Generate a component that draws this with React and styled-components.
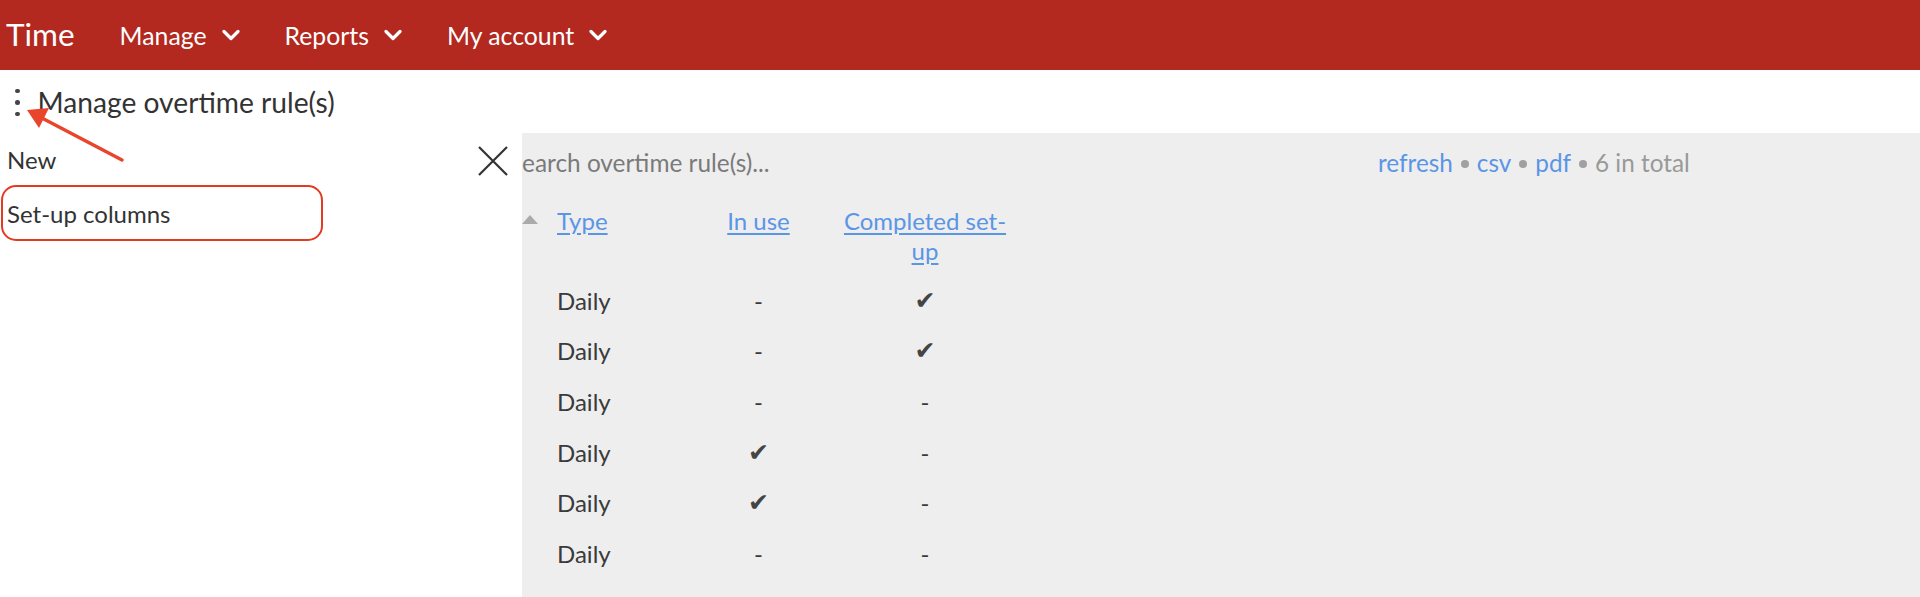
import React from "react";
import styled, { createGlobalStyle } from "styled-components";

const GlobalStyle = createGlobalStyle`
  html, body { margin: 0; padding: 0; }
  body {
    font-family: Lato, "Open Sans", "Liberation Sans", sans-serif;
    color: #333;
    background: #fff;
  }
  * { box-sizing: border-box; }
`;

const Page = styled.div`
  min-height: 100vh;
  display: flex;
  flex-direction: column;
`;

const TopBar = styled.header`
  height: 70px;
  background: #b3281f;
  display: flex;
  align-items: center;
  padding-left: 6px;
  color: #fff;
`;

const Brand = styled.div`
  font-size: 31.5px;
  margin-right: 45px;
  line-height: 1;
`;

const NavList = styled.nav`
  display: flex;
  align-items: center;
  gap: 45px;
`;

const NavItem = styled.div`
  display: flex;
  align-items: center;
  gap: 15px;
  font-size: 24.8px;
`;

const Chevron = () => (
  <svg width="18" height="12" viewBox="0 0 18 12" fill="none">
    <path d="M2 2.5 L9 9.5 L16 2.5" stroke="#fff" strokeWidth="3.2" strokeLinecap="round" strokeLinejoin="round" />
  </svg>
);

const TitleRow = styled.div`
  height: 63px;
  display: flex;
  align-items: center;
  padding-left: 15px;
  gap: 18px;
`;

const Dots = styled.div`
  display: flex;
  flex-direction: column;
  gap: 7px;
  padding-top: 2px;
  span {
    width: 4.5px;
    height: 4.5px;
    border-radius: 50%;
    background: #444;
  }
`;

const Title = styled.h1`
  margin: 0;
  font-size: 28.2px;
  font-weight: 400;
  color: #333;
`;

const Body = styled.div`
  flex: 1;
  display: flex;
  position: relative;
`;

const Sidebar = styled.div`
  width: 477px;
  padding-left: 1px;
  display: flex;
  flex-direction: column;
`;

const MenuItem = styled.div`
  width: 322px;
  height: ${(p) => (p.$highlighted ? "56px" : "52px")};
  display: flex;
  align-items: center;
  padding-left: 4px;
  font-size: 24px;
  color: #333;
  border: 2.5px solid ${(p) => (p.$highlighted ? "#e33b22" : "transparent")};
  border-radius: 15px;
`;

const ArrowOverlay = styled.svg`
  position: absolute;
  left: 0;
  top: -70px;
  pointer-events: none;
`;

const CloseButton = styled.button`
  width: 32px;
  height: 32px;
  margin-top: 12px;
  padding: 0;
  border: 0;
  background: none;
  flex-shrink: 0;
`;

const Panel = styled.section`
  flex: 1;
  margin-left: 13px;
  background: #eeeeee;
  display: flex;
  flex-direction: column;
`;

const Toolbar = styled.div`
  height: 58px;
  display: flex;
  align-items: center;
`;

const SearchInput = styled.input`
  width: 856px;
  border: 0;
  background: transparent;
  padding: 0;
  font-family: inherit;
  font-size: 24.4px;
  color: #333;
  outline: none;
  &::placeholder { color: #7a7a7a; }
`;

const Actions = styled.div`
  font-size: 24.3px;
  color: #999;
  display: flex;
  align-items: center;
  gap: 8px;
`;

const ActionLink = styled.a`
  color: #5b95e6;
  text-decoration: none;
`;

const Bullet = styled.span`
  width: 8px;
  height: 8px;
  margin-top: 3px;
  border-radius: 50%;
  background: #a0a0a0;
  display: inline-block;
`;

const Grid = styled.div`
  display: grid;
  grid-template-columns: 35px 140px 123px 210px;
  font-size: 24px;
  color: #3a3a3a;
`;

const HeadCell = styled.div`
  padding: 15px ${(p) => (p.$pad ? "22px" : "0")} 9px;
  line-height: 30px;
  display: flex;
  justify-content: ${(p) => (p.$align === "center" ? "center" : "flex-start")};
  align-items: flex-start;
`;

const SortIcon = styled.span`
  margin-top: 9px;
  width: 0;
  height: 0;
  border-left: 8.5px solid transparent;
  border-right: 8.5px solid transparent;
  border-bottom: 9px solid #aaa;
`;

const HeadLink = styled.a`
  color: #5b95e6;
  text-decoration: underline;
  text-underline-offset: 3px;
  text-align: center;
`;

const Cell = styled.div`
  height: 50.6px;
  display: flex;
  align-items: center;
  justify-content: ${(p) => (p.$align === "center" ? "center" : "flex-start")};
`;

const Check = styled.span`
  font-family: "DejaVu Sans", sans-serif;
  font-size: 25px;
  line-height: 1;
  color: #444;
`;

const rows = [
  { inUse: false, done: true },
  { inUse: false, done: true },
  { inUse: false, done: false },
  { inUse: true, done: false },
  { inUse: true, done: false },
  { inUse: false, done: false },
];

const Mark = ({ on }) => (on ? <Check>✔</Check> : <span>-</span>);

export default function App() {
  return (
    <Page>
      <GlobalStyle />
      <TopBar>
        <Brand>Time</Brand>
        <NavList>
          <NavItem>Manage <Chevron /></NavItem>
          <NavItem>Reports <Chevron /></NavItem>
          <NavItem>My account <Chevron /></NavItem>
        </NavList>
      </TopBar>
      <TitleRow>
        <Dots><span /><span /><span /></Dots>
        <Title>Manage overtime rule(s)</Title>
      </TitleRow>
      <Body>
        <Sidebar>
          <MenuItem>New</MenuItem>
          <MenuItem $highlighted>Set-up columns</MenuItem>
        </Sidebar>
        <ArrowOverlay width="140" height="120" viewBox="0 0 140 120">
          <line x1="122" y1="97" x2="40" y2="54" stroke="#e8452c" strokeWidth="3.5" strokeLinecap="round" />
          <polygon points="27,47 49,45 39,65" fill="#e8452c" />
        </ArrowOverlay>
        <CloseButton aria-label="close">
          <svg width="32" height="32" viewBox="0 0 32 32">
            <path d="M2 2 L30 30 M30 2 L2 30" stroke="#333" strokeWidth="2.2" />
          </svg>
        </CloseButton>
        <Panel>
          <Toolbar>
            <SearchInput placeholder="earch overtime rule(s)..." />
            <Actions>
              <ActionLink>refresh</ActionLink>
              <Bullet />
              <ActionLink>csv</ActionLink>
              <Bullet />
              <ActionLink>pdf</ActionLink>
              <Bullet />
              <span>6 in total</span>
            </Actions>
          </Toolbar>
          <Grid>
            <HeadCell><SortIcon /></HeadCell>
            <HeadCell><HeadLink>Type</HeadLink></HeadCell>
            <HeadCell $align="center"><HeadLink>In use</HeadLink></HeadCell>
            <HeadCell $align="center" $pad><HeadLink>Completed set-up</HeadLink></HeadCell>
            {rows.map((r, i) => (
              <React.Fragment key={i}>
                <Cell />
                <Cell>Daily</Cell>
                <Cell $align="center"><Mark on={r.inUse} /></Cell>
                <Cell $align="center"><Mark on={r.done} /></Cell>
              </React.Fragment>
            ))}
          </Grid>
        </Panel>
      </Body>
    </Page>
  );
}
